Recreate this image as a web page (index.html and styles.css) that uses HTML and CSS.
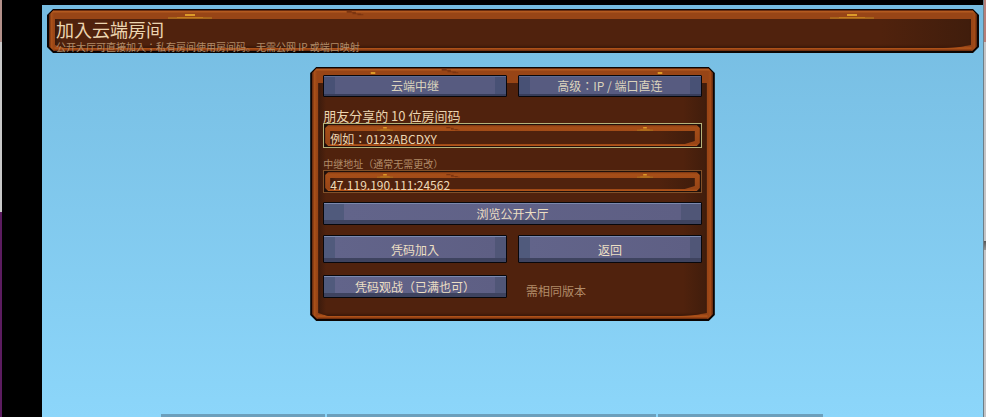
FILE: index.html
```
<!DOCTYPE html>
<html lang="ja">
<head>
    <meta charset="UTF-8">
    <meta name="viewport" content="width=device-width, initial-scale=1">
    <title>加入云端房间</title>
    <link rel="stylesheet" href="styles.css">
</head>
<body>
    <svg class="sprites" aria-hidden="true">
        <symbol id="gold" viewBox="0 0 44 5" preserveAspectRatio="none">
            <path d="M0 3h44v2H0z" fill="#a8641a"/>
            <path d="M9 3h26v1H9z" fill="#c07a1c"/>
            <path d="M17 0h10v2H17z" fill="#dc9a28"/>
        </symbol>
        <symbol id="crack" viewBox="0 0 20 6">
            <path d="M0 0h6v1h5v2h6v1h3v1h-7V4H7V2H0z" fill="#7c3510"/>
        </symbol>
    </svg>

    <div class="edge edge-left"></div>
    <main class="game">
        <header class="panel header">
            <svg class="mark mark-gold-left"><use href="#gold"/></svg>
            <svg class="mark mark-crack"><use href="#crack"/></svg>
            <svg class="mark mark-gold-right"><use href="#gold"/></svg>
            <div class="content">
                <h1>加入云端房间</h1>
                <p>公开大厅可直接加入；私有房间使用房间码。无需公网 IP 或端口映射</p>
            </div>
        </header>

        <section class="panel card">
            <svg class="mark mark-gold-left"><use href="#gold"/></svg>
            <svg class="mark mark-crack"><use href="#crack"/></svg>
            <svg class="mark mark-gold-right"><use href="#gold"/></svg>
            <form class="content">
                <div class="row">
                    <button type="button" class="btn btn-tab">云端中继</button>
                    <button type="button" class="btn btn-tab">高级：IP / 端口直连</button>
                </div>

                <label class="label" for="roomCode">朋友分享的 10 位房间码</label>
                <div class="field field-active">
                    <svg class="mark mark-gold-left"><use href="#gold"/></svg>
                    <svg class="mark mark-crack"><use href="#crack"/></svg>
                    <svg class="mark mark-gold-right"><use href="#gold"/></svg>
                    <input type="text" id="roomCode" maxlength="10" placeholder="例如：0123ABCDXY">
                </div>

                <label class="label label-small" for="relay">中继地址（通常无需更改）</label>
                <div class="field field-relay">
                    <svg class="mark mark-gold-left"><use href="#gold"/></svg>
                    <svg class="mark mark-crack"><use href="#crack"/></svg>
                    <svg class="mark mark-gold-right"><use href="#gold"/></svg>
                    <input type="text" id="relay" value="47.119.190.111:24562">
                </div>

                <button type="button" class="btn btn-wide">浏览公开大厅</button>
                <div class="row row-actions">
                    <button type="submit" class="btn btn-tall">凭码加入</button>
                    <button type="button" class="btn btn-tall">返回</button>
                </div>
                <div class="row row-watch">
                    <button type="button" class="btn">凭码观战（已满也可）</button>
                    <p class="note">需相同版本</p>
                </div>
            </form>
        </section>

        <div class="dock"><span></span><span></span><span></span></div>
    </main>
    <div class="edge edge-right"></div>
</body>
</html>
```
FILE: styles.css
```
* {
    box-sizing: border-box;
}
body {
    display: flex;
    min-height: 100vh;
    margin: 0;
    background-color: #000;
    font-family: "Noto Sans CJK JP", "Noto Sans CJK SC", sans-serif;
    font-size: 12px;
    color: #ecd5b0;
}
h1, p {
    margin: 0;
    font-weight: normal;
}
.sprites {
    position: absolute;
    width: 0;
    height: 0;
}

/* strips of the desktop beside the game window */
.edge-left {
    flex: 0 0 2px;
    margin-right: 40px;
    background: linear-gradient(#b3908a 42px, #c9c9c9 42px, #c9c9c9 212px, #5c1c60 212px);
}
.edge-right {
    flex: 0 0 3px;
    border-left: 1px solid #6c7f89;
    background: linear-gradient(#b87f79 42px, #c4c4c6 42px, #c4c4c6 241px, #555 241px, #999 250px, #c4c4c6 250px);
}
.game {
    flex: 1;
    display: flex;
    flex-direction: column;
    min-width: 0;
    border-top: 5px solid #000;
    background: linear-gradient(#76bce1, #8cd6fa);
}

/* wooden panels with cut corners */
.panel {
    position: relative;
    background: #0c0503;
    clip-path: polygon(6px 0, calc(100% - 6px) 0, 100% 6px, 100% calc(100% - 6px), calc(100% - 6px) 100%, 6px 100%, 0 calc(100% - 6px), 0 6px);
}
.panel::before {
    content: "";
    position: absolute;
    inset: 1px 2px 2px;
    background:
        linear-gradient(#6b2d10 1px, #b35a20 1px, #b35a20 2px, transparent 3px),
        linear-gradient(90deg, #6b2d10 1px, #ad531a 2px, #984516 5px, transparent 6px, transparent calc(100% - 6px), #984516 calc(100% - 5px), #a54c16 calc(100% - 2px), #6b2d10 calc(100% - 1px)),
        linear-gradient(#984516 calc(100% - 4px), #b9591b calc(100% - 3px), #8b3c12 calc(100% - 1px), #5b250c);
    clip-path: polygon(5px 0, calc(100% - 5px) 0, 100% 5px, 100% calc(100% - 5px), calc(100% - 5px) 100%, 5px 100%, 0 calc(100% - 5px), 0 5px);
}
.panel::after {
    content: "";
    position: absolute;
    inset: 10px 8px 5px;
    background: linear-gradient(90deg, #3a1a0c, #50220d 8px, #50220d calc(100% - 90px), #401d0c);
    box-shadow: inset 0 -2px 2px #3e1a0a;
    clip-path: polygon(0 0, 100% 0, 100% calc(100% - 3px), calc(100% - 12px) calc(100% - 1px), calc(100% - 28px) 100%, 10px 100%, 0 calc(100% - 3px));
}
.content {
    position: relative;
    z-index: 2;
}
.mark {
    position: absolute;
    z-index: 1;
    top: 5px;
    width: 44px;
    height: 5px;
}
.mark-gold-left {
    left: 13%;
}
.mark-gold-right {
    left: 84%;
}
.mark-crack {
    top: 2px;
    left: 32%;
    width: 20px;
}

.header {
    margin: 4px 4px 0 5px;
    padding: 10px 9px 0;
    height: 44px;
}
.header h1 {
    font-size: 18px;
    line-height: 21px;
}
.header p {
    font-size: 10px;
    line-height: 13px;
    color: #b08b68;
}

.card {
    width: 43%;
    min-width: 300px;
    margin: 14px auto 0;
    padding: 8px 13px 21px;
}
.card::after {
    top: 16px;
    background: linear-gradient(90deg, #3a1a0c, #50220d 8px, #50220d calc(100% - 24px), #401d0c);
}
.card > .mark {
    width: 20px;
}
.row {
    display: grid;
    grid-template-columns: 1fr 1fr;
    gap: 11px;
}
.row-actions {
    margin: 10px 0 12px;
}

.btn {
    display: block;
    width: 100%;
    height: 23px;
    padding: 0;
    border: 1px solid #07070c;
    border-radius: 1px;
    background:
        linear-gradient(#7a88ae 1px, transparent 1px, transparent calc(100% - 4px), #3e435f calc(100% - 4px)),
        linear-gradient(90deg, #505a7c 11px, #62648a 11px, #5e5f84 calc(100% - 11px), #505677 calc(100% - 11px));
    font: inherit;
    line-height: 20px;
    color: #ecdfc4;
    cursor: pointer;
}
.btn-tab {
    height: 22px;
    background:
        linear-gradient(#5d6b92 1px, transparent 1px, transparent calc(100% - 2px), #373d5a calc(100% - 2px)),
        linear-gradient(90deg, #485175 11px, #575b80 11px, #575b80 calc(100% - 11px), #485175 calc(100% - 11px));
    color: #dbd3bd;
}
.btn-tall {
    height: 28px;
    padding-top: 2px;
}
.btn-wide {
    background:
        linear-gradient(#7a88ae 1px, transparent 1px, transparent calc(100% - 4px), #3e435f calc(100% - 4px)),
        linear-gradient(90deg, #505a7c 20px, #62648a 20px, #5e5f84 calc(100% - 20px), #505677 calc(100% - 20px));
}

.label {
    display: block;
    margin-top: 11px;
    font-size: 13px;
    line-height: 15px;
}
.label-small {
    margin-top: 9px;
    font-size: 10px;
    line-height: 13px;
    color: #b08b68;
}
.field {
    position: relative;
    height: 25px;
    border: 1px solid #80512a;
    background: #20100a;
}
.field::before {
    content: "";
    position: absolute;
    inset: 1px;
    background: linear-gradient(#7a3512, #a64e18 2px, #984516 calc(100% - 2px), #b9591b);
    clip-path: polygon(3px 0, calc(100% - 3px) 0, 100% 3px, 100% calc(100% - 3px), calc(100% - 3px) 100%, 3px 100%, 0 calc(100% - 3px), 0 3px);
}
.field::after {
    content: "";
    position: absolute;
    inset: 7px 6px 3px;
    background: linear-gradient(90deg, #3a1a0c, #50220d 6px, #50220d 90%, #401d0c);
    clip-path: polygon(0 0, 100% 0, 100% calc(100% - 3px), calc(100% - 10px) 100%, 0 100%);
}
.field-active {
    border-color: #b5b37c;
}
.field-relay {
    height: 23px;
    margin-bottom: 9px;
}
.field .mark {
    top: 3px;
    width: 16px;
    height: 4px;
}
.field .mark-gold-left {
    left: 14%;
}
.field .mark-gold-right {
    left: 83%;
}
.field input {
    position: relative;
    z-index: 2;
    display: block;
    width: 100%;
    height: 100%;
    padding: 6px 6px 0;
    border: 0;
    outline: 0;
    background: transparent;
    font: inherit;
    line-height: 16px;
    color: #f0dbb8;
}
.field input::placeholder {
    color: #ecd5b0;
    opacity: 1;
}
.note {
    padding: 7px 8px 0;
    line-height: 18px;
    color: #b08b68;
}

/* top edge of the bar that rises from the bottom */
.dock {
    display: grid;
    grid-template-columns: 1fr 2fr 1fr;
    gap: 2px;
    margin: auto 17% 0 12.6%;
}
.dock span {
    height: 3px;
    background-color: #6b9fbc;
}
```
